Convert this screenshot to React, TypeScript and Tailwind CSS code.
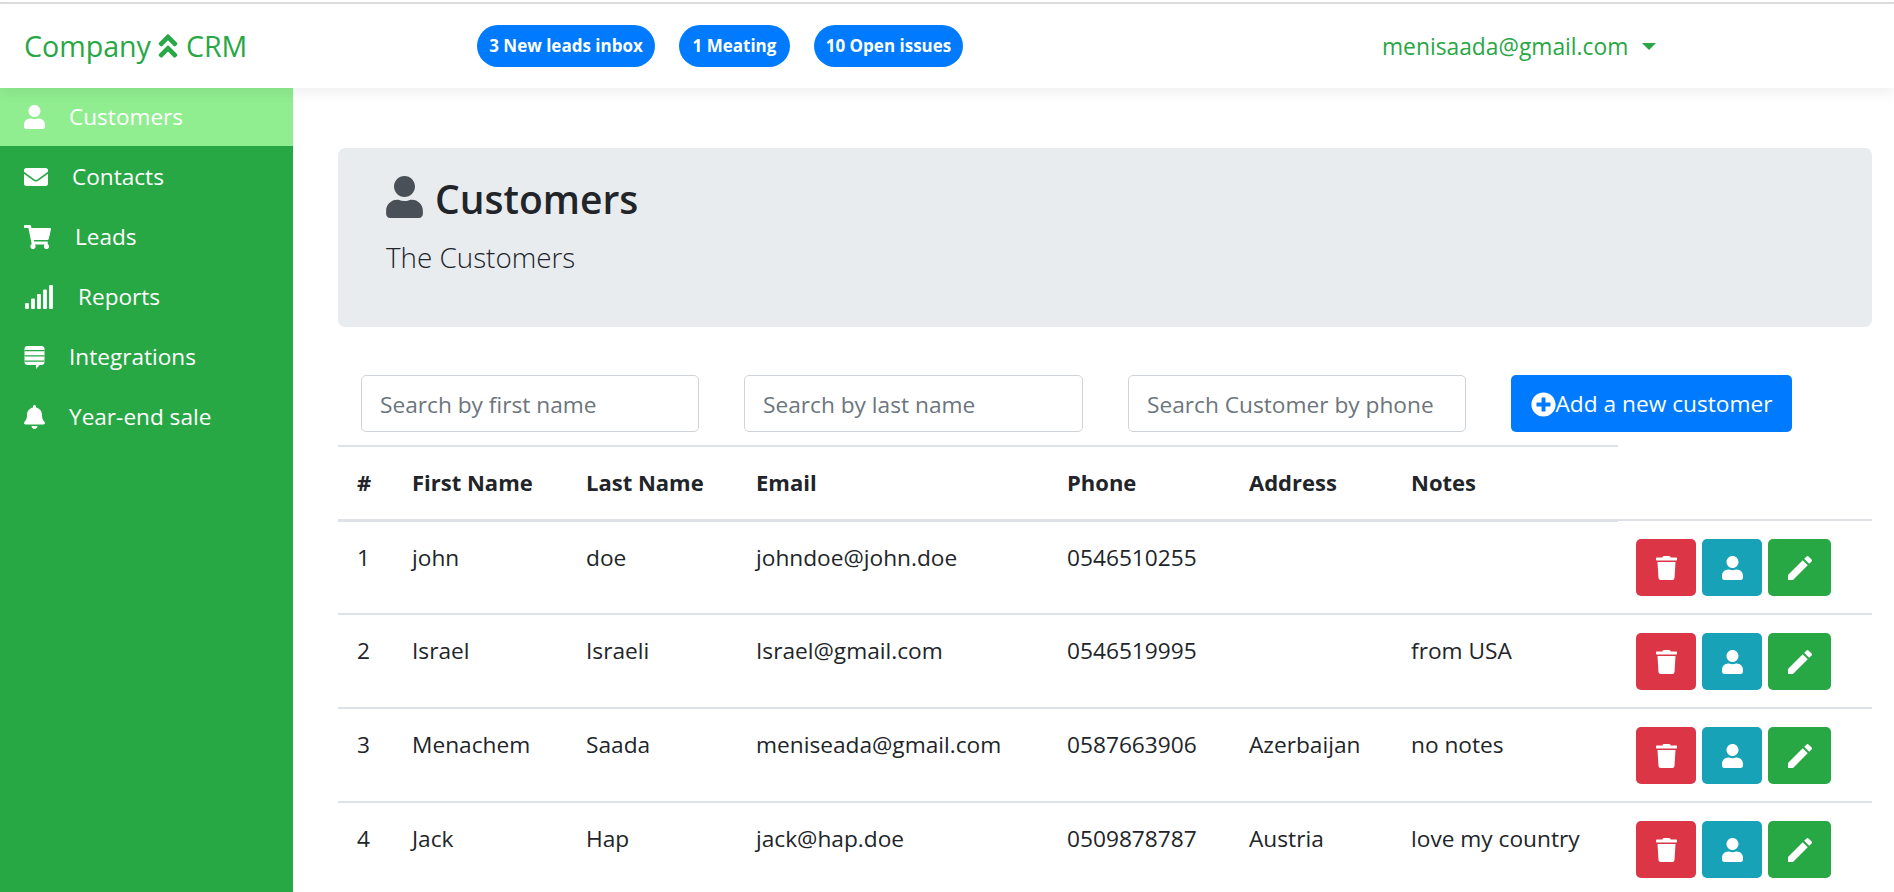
import { FaUser, FaEnvelope, FaShoppingCart, FaSignal, FaBell, FaPlusCircle, FaTrash, FaAngleDoubleUp } from 'react-icons/fa';
import { MdEdit } from 'react-icons/md';

const ChatLines = ({ className }: { className?: string }) => (
  <svg viewBox="0 0 20 23" className={className} fill="currentColor">
    <path d="M3 0h14a3 3 0 0 1 3 3v13a3 3 0 0 1-3 3h-2l-3.500 4v-4H3a3 3 0 0 1-3-3V3a3 3 0 0 1 3-3z" />
    <path d="M0 4h20v1.300H0zM0 9.300h20v1.300H0zM0 14.500h20v1.300H0z" fill="#28a745" />
  </svg>
);

const menu = [
  { label: 'Customers', icon: FaUser, size: 'h-[24px] w-[21px]', active: true },
  { label: 'Contacts', icon: FaEnvelope, size: 'h-[24px] w-[24px]', active: false },
  { label: 'Leads', icon: FaShoppingCart, size: 'h-[24px] w-[27px]', active: false },
  { label: 'Reports', icon: FaSignal, size: 'h-[24px] w-[30px]', active: false },
  { label: 'Integrations', icon: ChatLines, size: 'h-[23px] w-[21px]', active: false },
  { label: 'Year-end sale', icon: FaBell, size: 'h-[24px] w-[21px]', active: false },
];

const customers = [
  { first: 'john', last: 'doe', email: 'johndoe@john.doe', phone: '0546510255', address: '', notes: '' },
  { first: 'Israel', last: 'Israeli', email: 'Israel@gmail.com', phone: '0546519995', address: '', notes: 'from USA' },
  { first: 'Menachem', last: 'Saada', email: 'meniseada@gmail.com', phone: '0587663906', address: 'Azerbaijan', notes: 'no notes' },
  { first: 'Jack', last: 'Hap', email: 'jack@hap.doe', phone: '0509878787', address: 'Austria', notes: 'love my country' },
];

const headers = ['#', 'First Name', 'Last Name', 'Email', 'Phone', 'Address', 'Notes'];

const App = () => {
  return (
    <div className="h-[892px] overflow-hidden bg-white text-[22.700px] text-[#212529] font-['Open_Sans','Noto_Sans',sans-serif]">
      {/* Top bar */}
      <div className="mt-[2px] border-t-2 border-[#dddddd]"></div>
      <nav className="relative z-10 flex h-[84px] items-center bg-white shadow-[0_6px_12px_rgba(0,0,0,0.06)]">
        <div className="ml-[24px] flex w-[453px] items-center text-[28.600px] text-[#28a745]">
          Company
          <FaAngleDoubleUp className="ml-[2px] mr-[3px] text-[30px]" />
          CRM
        </div>
        <div className="flex items-center gap-[24px] text-[17px] font-bold text-white">
          <span className="flex h-[42px] w-[178px] items-center justify-center rounded-[21px] bg-[#007bff]">3 New leads inbox</span>
          <span className="flex h-[42px] w-[111px] items-center justify-center rounded-[21px] bg-[#007bff]">1 Meating</span>
          <span className="flex h-[42px] w-[149px] items-center justify-center rounded-[21px] bg-[#007bff]">10 Open issues</span>
        </div>
        <div className="ml-[419px] flex items-center text-[#28a745]">
          <span className="pt-[2px] text-[22.800px]">menisaada@gmail.com</span>
          <span className="ml-[14px] h-0 w-0 border-x-[7px] border-t-[7px] border-x-transparent border-t-[#28a745]"></span>
        </div>
      </nav>

      <div className="flex h-[804px]">
        {/* Sidebar */}
        <aside className="w-[293px] shrink-0 bg-[#28a745] text-[22.600px] text-white">
          {menu.map((item) => {
            const Icon = item.icon;
            return (
              <div key={item.label} className={item.active ? 'flex h-[58px] items-center bg-[#90ee90] pl-[24px]' : 'flex h-[60px] items-center pl-[24px] pt-[2px]'}>
                <Icon className={item.size} />
                <span className="ml-[24px]">{item.label}</span>
              </div>
            );
          })}
        </aside>

        {/* Main */}
        <main className="flex-1 pt-[60px] pl-[45px] pr-[22px]">
          <div className="h-[179px] rounded-[7px] bg-[#e9ecef] pl-[48px] pt-[22px]">
            <h1 className="flex items-center text-[39px] font-semibold">
              <FaUser className="mb-[4px] mr-[12px] h-[42px] w-[37px] text-[#495057]" />
              Customers
            </h1>
            <p className="mt-[8px] text-[27.800px] font-light">The Customers</p>
          </div>

          <div className="mt-[48px] flex items-center pl-[23px]">
            <input placeholder="Search by first name" className="h-[57px] w-[338px] rounded-[5px] border border-[#ced4da] bg-white px-[18px] pt-[2px] placeholder-[#6c757d]" />
            <input placeholder="Search by last name" className="ml-[45px] h-[57px] w-[339px] rounded-[5px] border border-[#ced4da] bg-white px-[18px] pt-[2px] placeholder-[#6c757d]" />
            <input placeholder="Search Customer by phone" className="ml-[45px] h-[57px] w-[338px] rounded-[5px] border border-[#ced4da] bg-white px-[18px] pt-[2px] placeholder-[#6c757d]" />
            <button className="ml-[45px] flex h-[57px] w-[281px] items-center justify-center rounded-[5px] bg-[#007bff] pt-[2px] text-white">
              <FaPlusCircle className="text-[25px]" />
              Add a new customer
            </button>
          </div>

          <table className="mt-[13px] w-[1534px] table-fixed border-collapse">
            <colgroup>
              <col className="w-[55px]" />
              <col className="w-[174px]" />
              <col className="w-[170px]" />
              <col className="w-[311px]" />
              <col className="w-[182px]" />
              <col className="w-[162px]" />
              <col className="w-[226px]" />
              <col className="w-[254px]" />
            </colgroup>
            <thead>
              <tr className="h-[74px]">
                {headers.map((h) => (
                  <th key={h} className="border-y-[3px] border-t-2 border-[#dee2e6] px-[19px] text-left text-[22px] font-bold">{h}</th>
                ))}
              </tr>
            </thead>
            <tbody>
              {customers.map((c, i) => (
                <tr key={i} className="h-[94px]">
                  <td className="border-t-2 border-[#dee2e6] p-[19px] align-top">{i + 1}</td>
                  <td className="border-t-2 border-[#dee2e6] p-[19px] align-top">{c.first}</td>
                  <td className="border-t-2 border-[#dee2e6] p-[19px] align-top">{c.last}</td>
                  <td className="border-t-2 border-[#dee2e6] p-[19px] align-top">{c.email}</td>
                  <td className="border-t-2 border-[#dee2e6] p-[19px] align-top">{c.phone}</td>
                  <td className="border-t-2 border-[#dee2e6] p-[19px] align-top">{c.address}</td>
                  <td className="border-t-2 border-[#dee2e6] p-[19px] align-top">{c.notes}</td>
                  <td className="border-t-2 border-[#dee2e6] pl-[18px] pt-[18px] pb-[17px] align-top">
                    <div className="flex gap-[6px] text-white">
                      <button className="flex h-[57px] w-[60px] items-center justify-center rounded-[5px] bg-[#dc3545]"><FaTrash className="h-[24px] w-[21px]" /></button>
                      <button className="flex h-[57px] w-[60px] items-center justify-center rounded-[5px] bg-[#17a2b8]"><FaUser className="h-[24px] w-[21px]" /></button>
                      <button className="flex h-[57px] w-[63px] items-center justify-center rounded-[5px] bg-[#28a745]"><MdEdit className="h-[32px] w-[32px]" /></button>
                    </div>
                  </td>
                </tr>
              ))}
            </tbody>
          </table>
        </main>
      </div>
    </div>
  );
};

export default App;
